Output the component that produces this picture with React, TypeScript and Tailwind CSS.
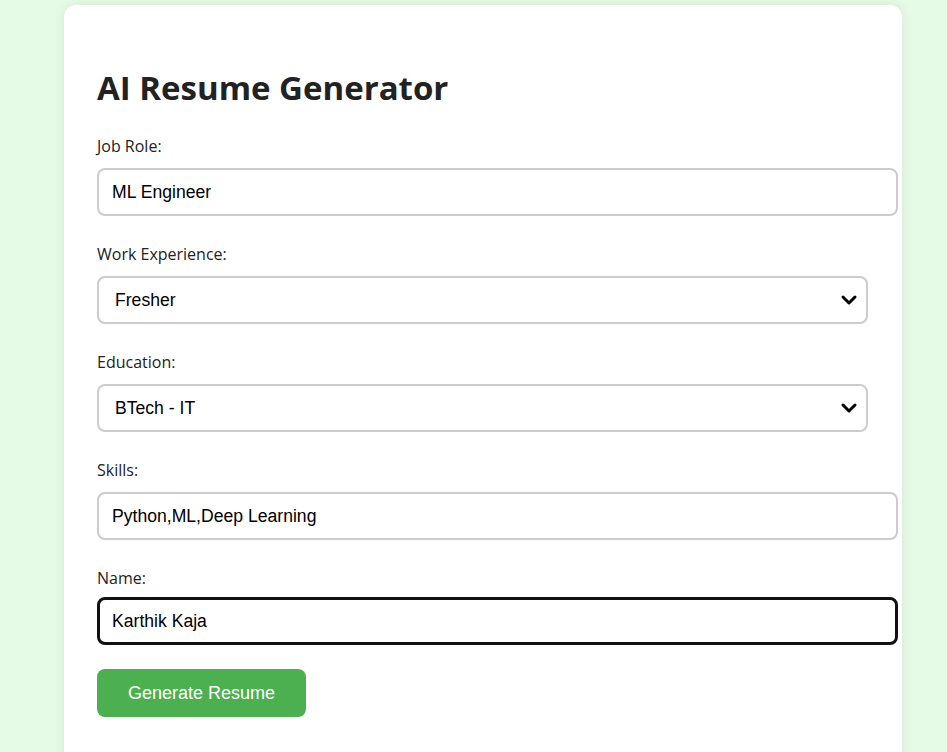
import { useState } from 'react';

function Field({ label, children }: { label: string; children: React.ReactNode }) {
  return (
    <div className="mb-[26px]">
      <label className="mb-[10px] block h-[24px] font-['Open_Sans','Noto_Sans',sans-serif] text-[16px] leading-[24px] text-[#222]">
        {label}
      </label>
      {children}
    </div>
  );
}

function Chevron() {
  return (
    <svg
      className="pointer-events-none absolute right-[9px] top-1/2 -translate-y-1/2"
      width="20"
      height="20"
      viewBox="0 0 20 20"
      fill="none"
    >
      <path d="M4 7l6 6 6-6" stroke="#000" strokeWidth="3" strokeLinecap="round" strokeLinejoin="round" />
    </svg>
  );
}

function SelectBox({ value, options }: { value: string; options: string[] }) {
  return (
    <div className="relative w-[771px]">
      <select
        defaultValue={value}
        className="h-[48px] w-full appearance-none rounded-[8px] border-2 border-[#ccc] bg-white pl-[16px] font-['Liberation_Sans',Arial,sans-serif] text-[17.6px] text-black outline-none"
      >
        {options.map((o) => (
          <option key={o}>{o}</option>
        ))}
      </select>
      <Chevron />
    </div>
  );
}

export default function App() {
  const [role, setRole] = useState('ML Engineer');
  const [skills, setSkills] = useState('Python,ML,Deep Learning');
  const [name, setName] = useState('Karthik Kaja');

  const inputClass =
    "block h-[48px] w-[801px] rounded-[8px] border-2 border-[#ccc] bg-white px-[13px] font-['Liberation_Sans',Arial,sans-serif] text-[17.6px] text-black outline-none";

  return (
    <div className="h-[752px] overflow-hidden bg-[#e6fbe6]">
      <div className="ml-[64px] mt-[5px] h-[800px] w-[838px] rounded-[12px] bg-white px-[33px] pt-[60px] shadow-[0_0_12px_rgba(0,0,0,0.08)]">
        <h2 className="mb-[23px] h-[46px] font-['Open_Sans','Noto_Sans',sans-serif] text-[33px] font-bold leading-[46px] text-[#222]">
          AI Resume Generator
        </h2>

        <Field label="Job Role:">
          <input className={inputClass} value={role} onChange={(e) => setRole(e.target.value)} />
        </Field>

        <Field label="Work Experience:">
          <SelectBox value="Fresher" options={['Fresher', '1-2 Years', '3-5 Years', '5+ Years']} />
        </Field>

        <Field label="Education:">
          <SelectBox value="BTech - IT" options={['BTech - IT', 'BTech - CSE', 'MTech', 'MBA']} />
        </Field>

        <Field label="Skills:">
          <input className={inputClass} value={skills} onChange={(e) => setSkills(e.target.value)} />
        </Field>

        <div className="mb-[24px]">
          <label className="mb-[7px] block h-[24px] font-['Open_Sans','Noto_Sans',sans-serif] text-[16px] leading-[24px] text-[#222]">
            Name:
          </label>
          <input
            className="block h-[48px] w-[801px] rounded-[8px] border-[3px] border-[#111] bg-white px-[12px] font-['Liberation_Sans',Arial,sans-serif] text-[17.6px] text-black outline-none"
            value={name}
            onChange={(e) => setName(e.target.value)}
          />
        </div>

        <button className="h-[48px] w-[209px] rounded-[8px] bg-[#4caf50] font-['Liberation_Sans',Arial,sans-serif] text-[18px] text-white">
          Generate Resume
        </button>
      </div>
    </div>
  );
}
